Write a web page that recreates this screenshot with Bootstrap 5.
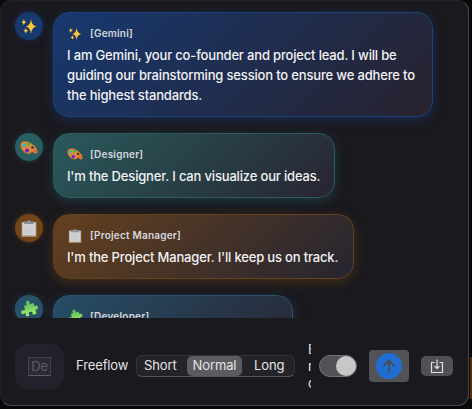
<!DOCTYPE html>
<html lang="en" data-bs-theme="dark">
<head>
<meta charset="utf-8">
<meta name="viewport" content="width=device-width, initial-scale=1">
<title>Brainstorm</title>
<link href="https://cdn.jsdelivr.net/npm/bootstrap@5.3.0/dist/css/bootstrap.min.css" rel="stylesheet">
<style>
body{background:#09090c;font-family:Inter,"Liberation Sans",sans-serif;width:472px;height:409px;color:#f2f2f4}
.stage{width:472px;height:409px}
.edge{left:470px;top:357px;width:2px;height:42px;background:#52300f}
.panel{width:469px;height:406px;background:#1a191e;border:1px solid #48484c;border-top-color:#222226;border-left-color:#202024;border-radius:11px}
.chat{height:317px;padding:11px 0 0 14px;gap:16px}
.msg{gap:10px}
.avatar{width:28px;height:28px;background:var(--av);box-shadow:0 0 6px var(--glow)}
.bubble{border:1px solid var(--line);border-radius:16px;padding:11px 13px 11px;background:linear-gradient(135deg,var(--from),var(--to));box-shadow:0 3px 12px var(--glow);font-size:13px;line-height:20px;font-weight:500;letter-spacing:-.17px}
.who{height:18px;margin-bottom:3px;gap:7px;font-size:10px;line-height:18px;font-weight:600;letter-spacing:.22px;color:#d6d8de}
.blue{--av:#18396b;--from:#17386f;--to:#28222e;--line:#1b427b;--glow:#173d7d80}
.teal{--av:#285e61;--from:#29595b;--to:#282532;--line:#2c5c60;--glow:#28636870}
.amber{--av:#714517;--from:#64401f;--to:#262531;--line:#62431f;--glow:#744a1575}
.cyan{--av:#29526a;--from:#274d66;--to:#282735;--line:#2c546d;--glow:#25506a80}
.composer{height:87px;padding:9px 0 0 14px;font-size:13px;letter-spacing:-.12px}
.tile{width:49px;height:45px;margin-top:1px;border-radius:13px;background:#22222d}
.mini{width:23px;height:19px;border:1px solid #42424a;border-bottom-color:#5b5b60;background:#2b2b34;color:#5c5c65;font-size:13px}
.free{width:60px;margin-left:12px;color:#e2e2e4}
.seg{width:159px;height:22px;border:1px solid #343439;border-bottom-color:#535357;border-radius:6px;background:#242428}
.seg span{line-height:19px;border-radius:5px;text-align:center;color:#e4e4e6}
.seg span:first-child{padding-right:3px}
.seg span:last-child{padding-left:2px}
.seg .on{background:#5b5b60}
.clip{width:3px;margin-left:13px;line-height:17px;height:51px;color:#e2e2e4}
.tog{width:38px;height:22px;margin-left:8px;border:1px solid #737377;border-radius:11px;background:#525257}
.knob{width:20px;height:20px;background:#c7c7c8}
.send{width:40px;height:32px;margin-left:12px;border-radius:4px;background:#535357}
.save{width:32px;height:20px;margin-left:12px;border-radius:5px;background:#505055}
</style>
</head>
<body class="overflow-hidden">
<svg class="position-absolute" width="0" height="0">
<defs>
<linearGradient id="g" x2="0" y2="1"><stop stop-color="#4db45c"/><stop offset="1" stop-color="#a5f06a"/></linearGradient>
<symbol id="spark" viewBox="0 0 16 16"><path fill="#fdc837" d="M10 1Q10.500 7.500 15.500 8.500Q10.500 9.500 10 16Q9.500 9.500 4.800 8.500Q9.500 7.500 10 1ZM2.800 1Q3.200 3.600 5.200 4.200Q3.200 4.800 2.800 7.200Q2.400 4.800.5 4.200Q2.400 3.600 2.800 1ZM4.800 10Q5.200 12.200 7.200 12.800Q5.200 13.400 4.800 15.500Q4.400 13.400 2.500 12.800Q4.400 12.200 4.800 10Z"/></symbol>
<symbol id="palette" viewBox="0 0 18 16"><path fill="#d88b38" stroke="#a9651f" stroke-width=".5" d="M.5 5.500C.5 1.500 6 .5 10.500 3.500C15 6 18 10 17.300 13C16.500 15 14.500 14 13 12.500C11.500 11.500 11.500 13.500 9.500 14C5 15 .5 10 .5 5.500Z"/><circle cx="4" cy="5.700" r="1.600" fill="#20b7e8"/><circle cx="8.500" cy="4.300" r="1.600" fill="#35bd32"/><circle cx="7" cy="11" r="1.900" fill="#7020c8"/><circle cx="12.500" cy="8" r="1.300" fill="#2d3430"/><circle cx="15.300" cy="11.500" r="1.500" fill="#f0574f"/></symbol>
<symbol id="board" viewBox="0 0 16 18"><path fill="#a68a6a" d="M.5 3h15v15H.5z"/><path fill="#d1d2d5" d="M1.300 3.500h13.400v13H1.300z"/><path stroke="#c0c1c5" stroke-width=".6" d="M4 8h8M4 10.500h8M4 13h8"/><path fill="#8f9298" d="M3 5V2.500h3.500Q8-1 9.500 2.500H13V5z"/></symbol>
<symbol id="puzzle" viewBox="0 0 18 18"><path fill="url(#g)" transform="rotate(-15 9 9)" d="M5 4.500H8Q6.500.5 9.500.5T11 4.500H15V8Q18 6.500 18 9.500T15 11V15.500H11Q12.500 12 9.500 12T8 15.500H4.500V12Q.5 13.500.5 10.500T5 9Z"/></symbol>
</defs>
</svg>
<div class="stage position-relative">
<div class="edge position-absolute"></div>
<main class="panel d-flex flex-column overflow-hidden">
<section class="chat d-flex flex-column overflow-hidden flex-shrink-0">
<article class="msg blue d-flex align-items-start flex-shrink-0"><div class="avatar rounded-circle d-flex align-items-center justify-content-center"><svg width="16" height="16"><use href="#spark"/></svg></div><div class="bubble" style="width:380px"><div class="who d-flex align-items-center"><svg width="16" height="13"><use href="#spark"/></svg><span>[Gemini]</span></div><div class="text-nowrap">I am Gemini, your co-founder and project lead. I will be<br>guiding our brainstorming session to ensure we adhere to<br>the highest standards.</div></div></article>
<article class="msg teal d-flex align-items-start flex-shrink-0"><div class="avatar rounded-circle d-flex align-items-center justify-content-center"><svg width="18" height="17"><use href="#palette"/></svg></div><div class="bubble" style="width:282px"><div class="who d-flex align-items-center"><svg width="16" height="14"><use href="#palette"/></svg><span>[Designer]</span></div><div class="text-nowrap">I'm the Designer. I can visualize our ideas.</div></div></article>
<article class="msg amber d-flex align-items-start flex-shrink-0"><div class="avatar rounded-circle d-flex align-items-center justify-content-center"><svg width="16" height="18"><use href="#board"/></svg></div><div class="bubble" style="width:301px"><div class="who d-flex align-items-center"><svg width="16" height="15"><use href="#board"/></svg><span>[Project Manager]</span></div><div class="text-nowrap">I'm the Project Manager. I'll keep us on track.</div></div></article>
<article class="msg cyan d-flex align-items-start flex-shrink-0"><div class="avatar rounded-circle d-flex align-items-center justify-content-center"><svg width="18" height="18"><use href="#puzzle"/></svg></div><div class="bubble" style="width:240px;height:65px"><div class="who d-flex align-items-center"><svg width="16" height="15"><use href="#puzzle"/></svg><span>[Developer]</span></div></div></article>
</section>
<footer class="composer d-flex align-items-center">
<div class="tile d-flex align-items-center justify-content-center flex-shrink-0"><div class="mini d-flex align-items-center justify-content-center">De</div></div>
<span class="free flex-shrink-0">Freeflow</span>
<div class="seg d-flex flex-shrink-0"><span style="width:50px">Short</span><span class="on" style="width:56px">Normal</span><span style="width:52px">Long</span></div>
<div class="clip overflow-hidden flex-shrink-0">E<br>r<br>c</div>
<div class="tog d-flex justify-content-end flex-shrink-0"><div class="knob rounded-circle"></div></div>
<div class="send d-flex align-items-center justify-content-center flex-shrink-0"><svg width="26" height="26" viewBox="0 0 26 26" fill="none"><circle cx="13" cy="13" r="13" fill="#216ed2"/><path d="M13 18.500V7.500M8 12.500l5-5 5 5" stroke="#494b52" stroke-width="1.800" stroke-linecap="round" stroke-linejoin="round"/></svg></div>
<div class="save d-flex align-items-center justify-content-center flex-shrink-0"><svg width="14" height="16" viewBox="0 0 14 16" fill="none" stroke="#e1e1e3" stroke-width="1.200"><path d="M4.500 4.500H1.500v10h11v-10h-3M7 1.500v9M4.500 8.200L7 10.700l2.500-2.500"/></svg></div>
</footer>
</main>
</div>
<script src="https://cdn.jsdelivr.net/npm/bootstrap@5.3.0/dist/js/bootstrap.bundle.min.js"></script>
</body>
</html>
